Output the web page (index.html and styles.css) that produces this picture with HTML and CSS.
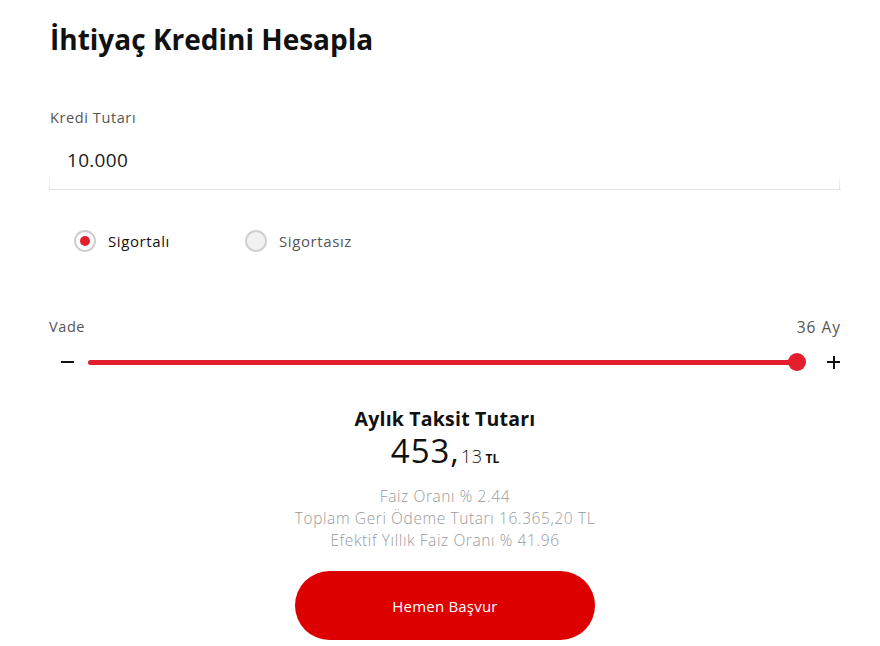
FILE: index.html
```html
<!DOCTYPE html>
<html lang="tr">
<head>
<meta charset="utf-8">
<link rel="stylesheet" href="styles.css">
</head>
<body>
<main class="calc">
  <h1 class="title">İhtiyaç Kredini Hesapla</h1>

  <section class="field">
    <label class="field-label">Kredi Tutarı</label>
    <div class="input">10.000</div>
  </section>

  <div class="radios">
    <div class="radio radio-on"><span class="dot"></span><span class="radio-text">Sigortalı</span></div>
    <div class="radio"><span class="dot"></span><span class="radio-text">Sigortasız</span></div>
  </div>

  <section class="term">
    <div class="term-head"><span>Vade</span><span class="term-value">36 Ay</span></div>
    <div class="slider">
      <span class="minus"></span>
      <div class="track"><span class="thumb"></span></div>
      <span class="plus"></span>
    </div>
  </section>

  <section class="result">
    <h2 class="result-title">Aylık Taksit Tutarı</h2>
    <div class="amount"><span class="int">453,</span><span class="dec">13</span><span class="cur">TL</span></div>
    <div class="details">
      <p>Faiz Oranı % 2.44</p>
      <p>Toplam Geri Ödeme Tutarı 16.365,20 TL</p>
      <p>Efektif Yıllık Faiz Oranı % 41.96</p>
    </div>
    <button class="apply">Hemen Başvur</button>
  </section>
</main>
</body>
</html>
```

FILE: styles.css
```css
* { box-sizing: border-box; }
html, body { margin: 0; padding: 0; background: #fff; }
body {
  font-family: "Open Sans", "DejaVu Sans", sans-serif;
  color: #111;
  width: 880px;
  height: 646px;
  overflow: hidden;
}
.calc {
  width: 792px;
  margin-left: 49px;
  padding-top: 22px;
  display: flex;
  flex-direction: column;
}
.title {
  margin: 0 0 0 1px;
  font-size: 28px;
  line-height: 34px;
  font-weight: 700;
  color: #111;
}
.field { margin-top: 53px; display: flex; flex-direction: column; }
.field-label {
  font-size: 14.5px;
  line-height: 18px;
  color: #555;
  margin-left: 1px;
  letter-spacing: 0.6px;
}
.input {
  position: relative;
  height: 63px;
  padding: 19px 0 0 18px;
  font-size: 19px;
  line-height: 28px;
  color: #1a1a1a;
  letter-spacing: 0.3px;
  border-bottom: 1px solid #e4e4e4;
}
.input::before, .input::after {
  content: "";
  position: absolute;
  bottom: 0;
  width: 1px;
  height: 16px;
  background: linear-gradient(to bottom, rgba(228,228,228,0), #e4e4e4);
}
.input::before { left: 0; }
.input::after { right: 1px; }
.radios {
  display: flex;
  margin-top: 39px;
  padding-left: 25px;
}
.radio {
  display: flex;
  align-items: center;
  gap: 12px;
  width: 171px;
  height: 24px;
}
.dot {
  width: 22px;
  height: 22px;
  border-radius: 50%;
  border: 2px solid #cfcfcf;
  background: #f2f2f2;
  display: flex;
  align-items: center;
  justify-content: center;
}
.radio-on .dot { background: #fff; }
.radio-on .dot::after {
  content: "";
  width: 10px;
  height: 10px;
  border-radius: 50%;
  background: #e31e2d;
}
.radio-text { font-size: 15px; color: #555; letter-spacing: 0.6px; }
.radio-on .radio-text { color: #111; }
.term { margin-top: 65px; }
.term-head {
  display: flex;
  justify-content: space-between;
  font-size: 14.5px;
  line-height: 18px;
  color: #555;
  letter-spacing: 0.6px;
}
.term-value { font-size: 15.5px; letter-spacing: 1px; }
.slider {
  display: flex;
  align-items: center;
  height: 20px;
  margin-top: 16px;
}
.minus {
  width: 13px;
  height: 2px;
  background: #111;
  margin-left: 12px;
}
.track {
  position: relative;
  flex: 1;
  height: 5px;
  border-radius: 3px;
  background: #e31e2d;
  margin: 0 30px 0 14px;
}
.thumb {
  position: absolute;
  right: -9px;
  top: 50%;
  width: 18px;
  height: 18px;
  margin-top: -9px;
  border-radius: 50%;
  background: #e31e2d;
}
.plus {
  position: relative;
  width: 13px;
  height: 13px;
  margin-right: 1px;
}
.plus::before, .plus::after {
  content: "";
  position: absolute;
  background: #111;
}
.plus::before { left: 0; right: 0; top: 5.5px; height: 2px; }
.plus::after { top: 0; bottom: 0; left: 5.5px; width: 2px; }
.result {
  display: flex;
  flex-direction: column;
  align-items: center;
  margin-top: 35px;
}
.result-title {
  margin: 0;
  font-size: 19.5px;
  line-height: 24px;
  font-weight: 700;
  color: #111;
  letter-spacing: 0.2px;
}
.amount {
  display: flex;
  align-items: baseline;
  line-height: 36px;
  margin-top: 2px;
}
.int { font-size: 33px; font-weight: 400; color: #111; letter-spacing: 1px; }
.dec { font-size: 18px; font-weight: 300; margin-left: 1px; letter-spacing: 0.5px; color: #111; }
.cur { font-size: 12px; font-weight: 700; margin-left: 3px; }
.details {
  margin-top: 8px;
  display: flex;
  flex-direction: column;
  align-items: center;
}
.details p {
  margin: 0;
  font-size: 15.5px;
  line-height: 22px;
  font-weight: 300;
  color: #9a9a9a;
  letter-spacing: 0.6px;
}
.apply {
  margin-top: 20px;
  width: 300px;
  height: 69px;
  border: 0;
  border-radius: 35px;
  background: #dd0000;
  color: #fff;
  font-family: inherit;
  font-size: 15px;
  font-weight: 400;
  letter-spacing: 0.2px;
  cursor: pointer;
}
```
